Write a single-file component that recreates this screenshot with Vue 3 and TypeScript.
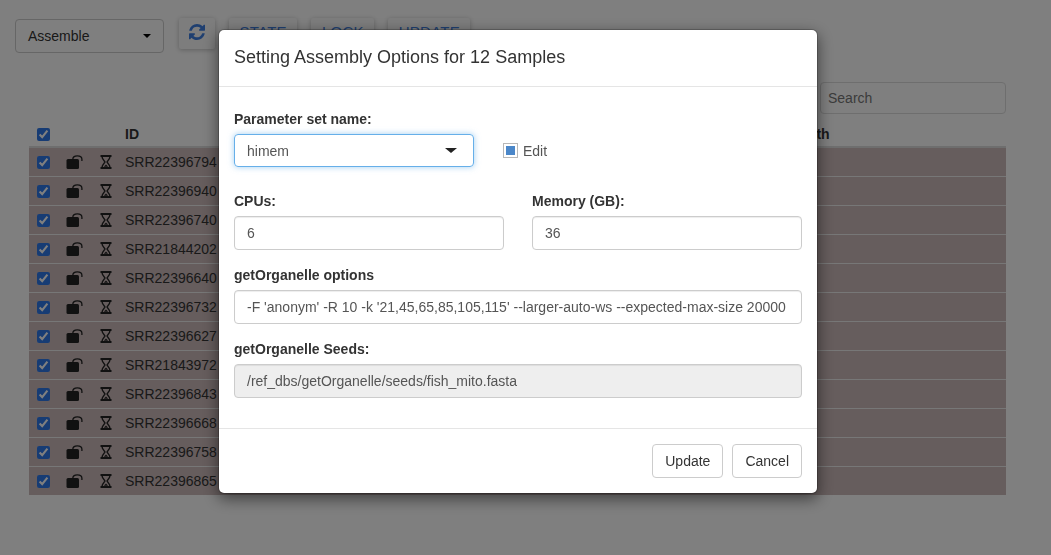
<script setup lang="ts">
const samples: string[] = [
  'SRR22396794', 'SRR22396940', 'SRR22396740', 'SRR21844202',
  'SRR22396640', 'SRR22396732', 'SRR22396627', 'SRR21843972',
  'SRR22396843', 'SRR22396668', 'SRR22396758', 'SRR22396865',
];

const refreshPath =
  'M1511 928q0 5-1 7-64 268-268 434.5t-478 166.5q-146 0-282.5-55t-243.5-157l-129 129q-19 19-45 19t-45-19-19-45v-448q0-26 19-45t45-19h448q26 0 45 19t19 45-19 45l-137 137q71 66 161 102t187 36q134 0 250-65t186-179q11-17 53-117 8-23 30-23h192q13 0 22.5 9.5t9.5 22.5zm25-800v448q0 26-19 45t-45 19h-448q-26 0-45-19t-19-45 19-45l138-138q-148-137-349-137-134 0-250 65t-186 179q-11 17-53 117-8 23-30 23h-199q-13 0-22.5-9.5t-9.5-22.5v-7q65-268 270-434.5t480-166.5q146 0 284 55.5t245 156.5l130-129q19-19 45-19t45 19 19 45z';
</script>

<template>
  <div class="page">
    <div class="toolbar">
      <div class="mode-select">
        <span>Assemble</span>
        <i class="caret"></i>
      </div>
      <button class="tool-btn icon-btn">
        <svg width="16" height="16" viewBox="0 0 1536 1536"><path :d="refreshPath" fill="currentColor" /></svg>
      </button>
      <button class="tool-btn">STATE</button>
      <button class="tool-btn">LOCK</button>
      <button class="tool-btn">UPDATE</button>
    </div>

    <div class="search-row">
      <input class="search" type="text" placeholder="Search" />
    </div>

    <table class="samples">
      <colgroup>
        <col style="width: 29px" />
        <col style="width: 34px" />
        <col style="width: 25px" />
        <col style="width: 658px" />
        <col />
      </colgroup>
      <thead>
        <tr>
          <th><input class="check head-check" type="checkbox" checked /></th>
          <th></th>
          <th></th>
          <th>ID</th>
          <th>Length</th>
        </tr>
      </thead>
      <tbody>
        <tr v-for="id in samples" :key="id">
          <td><input class="check" type="checkbox" checked /></td>
          <td>
            <svg class="lock" width="17" height="15" viewBox="0 0 17 15">
              <rect x="0.500" y="4" width="12.500" height="10" rx="1.500" fill="#222" />
              <path d="M6.800 4.500V4.300C6.800 2 8.800 0.800 11.300 0.800S15.900 2 15.900 4.300V6" stroke="#222" stroke-width="1.300" fill="none" />
            </svg>
          </td>
          <td>
            <svg class="hourglass" width="12" height="14" viewBox="0 0 12 14">
              <path d="M0.500 1h11M0.500 13h11" stroke="#222" stroke-width="1.800" fill="none" />
              <path d="M2 1.500L2.500 3.500L5 7L2.500 10.500L2 12.500M10 1.500L9.500 3.500L7 7L9.500 10.500L10 12.500" stroke="#222" stroke-width="1.300" fill="none" />
              <path d="M3.800 11.800L6 9.500l2.200 2.300z" fill="#222" />
            </svg>
          </td>
          <td>{{ id }}</td>
          <td></td>
        </tr>
      </tbody>
    </table>

    <div class="backdrop">
      <div class="modal">
        <div class="modal-header">
          <h4>Setting Assembly Options for 12 Samples</h4>
        </div>
        <div class="modal-body">
          <label>Parameter set name:</label>
          <div class="param-row">
            <div class="param-select">
              <span>himem</span>
              <i class="caret"></i>
            </div>
            <label class="edit"><input type="checkbox" checked />Edit</label>
          </div>

          <div class="two-col">
            <div class="field">
              <label>CPUs:</label>
              <input type="text" value="6" />
            </div>
            <div class="field">
              <label>Memory (GB):</label>
              <input type="text" value="36" />
            </div>
          </div>

          <div class="field">
            <label>getOrganelle options</label>
            <input type="text" value="-F 'anonym' -R 10 -k '21,45,65,85,105,115' --larger-auto-ws --expected-max-size 20000" />
          </div>

          <div class="field">
            <label>getOrganelle Seeds:</label>
            <input type="text" value="/ref_dbs/getOrganelle/seeds/fish_mito.fasta" disabled />
          </div>
        </div>
        <div class="modal-footer">
          <button class="btn">Update</button>
          <button class="btn">Cancel</button>
        </div>
      </div>
    </div>
  </div>
</template>

<style>
html,
body {
  background: #fff;
  overflow: hidden;
}
</style>

<style scoped>
.page {
  height: 555px;
  box-sizing: border-box;
  padding: 18px 45px 0 15px;
  font-family: "Liberation Sans", Arial, sans-serif;
  font-size: 14px;
  line-height: 20px;
  color: #333;
}

/* Toolbar */
.toolbar {
  display: flex;
  align-items: flex-start;
  gap: 14px;
}

.mode-select {
  box-sizing: border-box;
  width: 149px;
  height: 34px;
  margin-top: 1px;
  margin-right: 1px;
  padding: 0 12px;
  display: flex;
  align-items: center;
  justify-content: space-between;
  border: 1px solid #ccc;
  border-radius: 4px;
  color: #333;
}

.caret {
  width: 0;
  height: 0;
  border-top: 4px solid #000;
  border-left: 4px solid transparent;
  border-right: 4px solid transparent;
}

.tool-btn {
  height: 31px;
  padding: 0 10.5px 5px;
  border: none;
  border-radius: 2px;
  background: #fafafa;
  color: #3f7fe0;
  font-family: inherit;
  font-size: 15px;
  letter-spacing: 0.25px;
  box-shadow: 0 1px 5px rgba(0, 0, 0, 0.25);
}

.icon-btn {
  width: 36px;
  padding: 0 0 3px;
  display: flex;
  align-items: center;
  justify-content: center;
}

/* Table */
.search-row {
  display: flex;
  justify-content: flex-end;
  margin-top: 29px;
}

.search {
  box-sizing: border-box;
  width: 186px;
  height: 32px;
  padding: 0 7px;
  border: 1px solid #ddd;
  border-radius: 4px;
  font-family: inherit;
  font-size: 14px;
  outline: none;
}

.search::placeholder {
  color: #777;
}

.samples {
  width: 977px;
  margin: 8px 0 0 14px;
  border-collapse: collapse;
  table-layout: fixed;
}

.samples th {
  height: 22px;
  padding: 0 0 2px 8px;
  text-align: left;
  vertical-align: bottom;
  border-bottom: 2px solid #ddd;
  color: #333;
}

.samples td {
  height: 28px;
  padding: 0 0 0 8px;
  vertical-align: middle;
  background: #ccbaba;
  border-bottom: 1px solid #eee;
  white-space: nowrap;
}

.samples tr:last-child td {
  border-bottom: none;
}

.check {
  display: block;
  width: 13px;
  height: 13px;
  margin: 0;
  accent-color: #2f78e8;
}

.head-check {
  margin-bottom: 3px;
}

.lock,
.hourglass {
  display: block;
}

/* Modal */
.backdrop {
  position: fixed;
  inset: 0;
  z-index: 10;
  background: rgba(0, 0, 0, 0.5);
  display: flex;
  justify-content: flex-start;
  align-items: flex-start;
}

.modal {
  box-sizing: border-box;
  width: 600px;
  margin: 29px 0 0 218px;
  background: #fff;
  border-radius: 6px;
  border: 1px solid rgba(0, 0, 0, 0.2);
  background-clip: padding-box;
  box-shadow: 0 5px 15px rgba(0, 0, 0, 0.5);
}

.modal-header {
  height: 57px;
  box-sizing: border-box;
  padding: 15px;
  border-bottom: 1px solid #e5e5e5;
}

.modal-header h4 {
  margin: 0;
  font-size: 18px;
  font-weight: 500;
  line-height: 25px;
  color: #333;
}

.modal-body {
  padding: 22px 15px 15px;
}

label {
  display: block;
  margin-bottom: 5px;
  font-weight: 700;
}

.param-row {
  display: flex;
  align-items: center;
  gap: 29px;
  margin-bottom: 24px;
}

.param-select {
  box-sizing: border-box;
  width: 240px;
  height: 33px;
  padding: 0 12px;
  display: flex;
  align-items: center;
  justify-content: space-between;
  border: 1px solid #66afe9;
  border-radius: 4px;
  box-shadow: 0 0 6px rgba(102, 175, 233, 0.6);
  color: #555;
}

.param-select .caret {
  margin-right: 4px;
  border-top-width: 5px;
  border-left-width: 6px;
  border-right-width: 6px;
  border-top-color: #222;
}

.edit {
  display: flex;
  align-items: center;
  gap: 5px;
  margin: 0;
  font-weight: 400;
  color: #555;
}

.edit input {
  appearance: none;
  box-sizing: border-box;
  width: 15px;
  height: 15px;
  margin: 0;
  padding: 2px;
  border: 1px solid #b8b8b8;
  background: #4b87c9;
  background-clip: content-box;
}

.two-col {
  display: grid;
  grid-template-columns: 270px 270px;
  gap: 28px;
}

.field {
  margin-bottom: 15px;
}

.field input {
  display: block;
  box-sizing: border-box;
  width: 100%;
  height: 34px;
  padding: 0 12px;
  border: 1px solid #ccc;
  border-radius: 4px;
  font-family: inherit;
  font-size: 14px;
  color: #555;
  background: #fff;
  box-shadow: inset 0 1px 1px rgba(0, 0, 0, 0.075);
}

.field input:disabled {
  background: #eee;
}

.modal-footer {
  display: flex;
  justify-content: flex-end;
  gap: 9px;
  padding: 15px;
  border-top: 1px solid #e5e5e5;
}

.btn {
  height: 34px;
  padding: 0 12px;
  border: 1px solid #ccc;
  border-radius: 4px;
  background: #fff;
  font-family: inherit;
  font-size: 14px;
  color: #333;
}
</style>
